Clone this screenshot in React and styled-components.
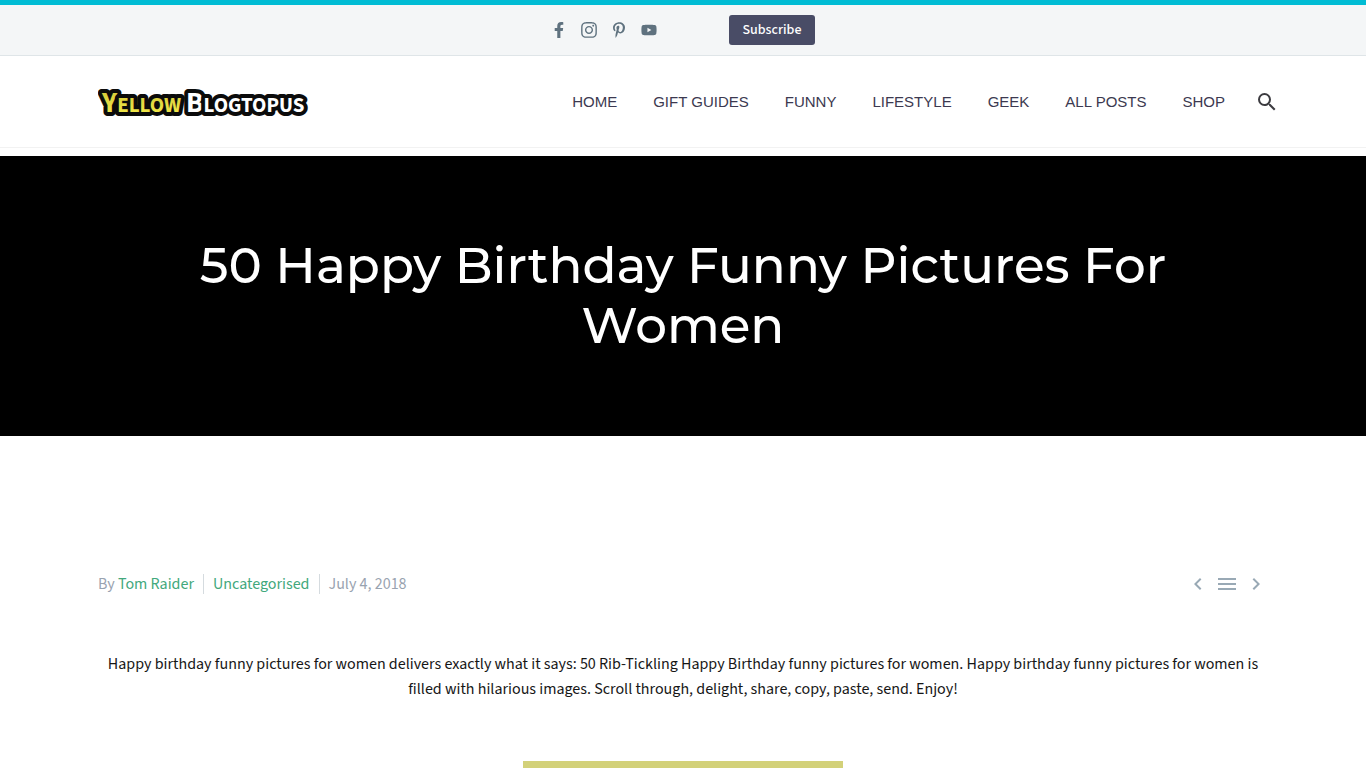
import React from "react"
import styled, { createGlobalStyle } from "styled-components"
import {
  FaFacebookF,
  FaInstagram,
  FaPinterestP,
  FaYoutube,
} from "react-icons/fa"
import {
  MdChevronLeft,
  MdChevronRight,
  MdMenu,
  MdSearch,
} from "react-icons/md"

const GlobalStyle = createGlobalStyle`
  * {
    box-sizing: border-box;
  }
  body {
    margin: 0;
    background: #fff;
    color: #161616;
    font-family: "Source Sans Pro", "Source Sans 3", "Noto Sans CJK SC", sans-serif;
    font-size: 16px;
    line-height: 25px;
  }
  a {
    color: inherit;
    text-decoration: none;
  }
`

const Container = styled.div`
  width: 100%;
  max-width: 1170px;
  margin: 0 auto;
`

const TopArea = styled.div`
  display: flex;
  align-items: center;
  justify-content: center;
  gap: 72px;
  height: 56px;
  border-top: 5px solid #00bcd4;
  border-bottom: 1px solid #dfe5e8;
  background: #f4f6f7;
`

const Socials = styled.div`
  display: flex;
  gap: 14px;
  color: #5f727f;
`

const SocialLink = styled.a`
  display: flex;
  align-items: center;
  justify-content: center;
  width: 16px;
  height: 16px;
  font-size: ${(props) => props.$size || 16}px;
`

const SubscribeLink = styled.a`
  height: 30px;
  padding: 0 14px;
  border-radius: 3px;
  background: #494c66;
  color: #fff;
  font-size: 14px;
  font-weight: 500;
  line-height: 30px;
`

const Header = styled.header`
  margin-bottom: 8px;
  border-bottom: 1px solid #f2f2f2;
`

const HeaderRow = styled(Container)`
  display: flex;
  align-items: center;
  justify-content: space-between;
  height: 91px;
`

const LogoLink = styled.a`
  display: flex;
`

const Menu = styled.nav`
  display: flex;
  align-items: center;
  margin-right: -23px;
  color: #3c3950;
  font-family: "Liberation Sans", Arial, sans-serif;
  font-size: 15px;
`

const MenuLink = styled.a`
  padding: 0 18px;
  white-space: nowrap;
`

const SearchButton = styled.button`
  display: flex;
  padding: 0 12px;
  border: 0;
  background: none;
  color: #3c3b40;
  font-size: 24px;
`

const TitleBlock = styled.section`
  padding: 80px 0;
  background: #000;
`

const Title = styled.h1`
  max-width: 1010px;
  margin: 0 auto;
  color: #fff;
  font-family: Montserrat, Inter, sans-serif;
  font-size: 50px;
  font-weight: 500;
  line-height: 60px;
  text-align: center;
`

const PostMeta = styled.div`
  display: flex;
  align-items: center;
  justify-content: space-between;
  margin-top: 136px;
  color: #99a3b0;
`

const MetaList = styled.div`
  display: flex;
  align-items: center;
`

const MetaItem = styled.span`
  line-height: 20px;

  & + & {
    margin-left: 9px;
    padding-left: 9px;
    border-left: 1px solid #d5dbdf;
  }

  a {
    color: #42a87c;
  }
`

const PostNav = styled.nav`
  display: flex;
  gap: 5px;
  color: #99a9b5;
  font-size: 24px;

  a {
    display: flex;
  }
`

const Intro = styled.p`
  margin: 56px 0 59px;
  text-align: center;
`

const Picture = styled.div`
  width: 320px;
  height: 320px;
  margin: 0 auto;
  background: #d3d179;
`

const menu = [
  "HOME",
  "GIFT GUIDES",
  "FUNNY",
  "LIFESTYLE",
  "GEEK",
  "ALL POSTS",
  "SHOP",
]

const socials = [
  { name: "Facebook", Icon: FaFacebookF },
  { name: "Instagram", Icon: FaInstagram, size: 18 },
  { name: "Pinterest", Icon: FaPinterestP },
  { name: "YouTube", Icon: FaYoutube },
]

function Logo() {
  return (
    <svg width="212" height="44" viewBox="0 0 212 44" role="img" aria-label="Yellow Blogtopus">
      <defs>
        <linearGradient id="gold" x1="0" y1="0" x2="0" y2="1">
          <stop offset="0.3" stopColor="#d8cf3c" />
          <stop offset="0.8" stopColor="#f4ea4a" />
        </linearGradient>
      </defs>
      <g
        fontFamily="'Source Sans Pro', 'Source Sans 3', 'Noto Sans CJK SC', sans-serif"
        fontWeight="700"
        fontSize="21"
        stroke="#0b0b0b"
        strokeWidth="8"
        strokeLinejoin="round"
        paintOrder="stroke"
      >
        <text x="4" y="32" fill="url(#gold)">
          <tspan fontSize="29">Y</tspan>ELLOW
        </text>
        <text x="88" y="32" fill="#fff">
          <tspan fontSize="29">B</tspan>LOGTOPUS
        </text>
      </g>
    </svg>
  )
}

export default function App() {
  return (
    <>
      <GlobalStyle />
      <TopArea>
        <Socials>
          {socials.map(({ name, Icon, size }) => (
            <SocialLink href="#" key={name} aria-label={name} $size={size}>
              <Icon />
            </SocialLink>
          ))}
        </Socials>
        <SubscribeLink href="#">Subscribe</SubscribeLink>
      </TopArea>
      <Header>
        <HeaderRow>
          <LogoLink href="#">
            <Logo />
          </LogoLink>
          <Menu>
            {menu.map((item) => (
              <MenuLink href="#" key={item}>
                {item}
              </MenuLink>
            ))}
            <SearchButton aria-label="Search">
              <MdSearch />
            </SearchButton>
          </Menu>
        </HeaderRow>
      </Header>
      <TitleBlock>
        <Title>50 Happy Birthday Funny Pictures For Women</Title>
      </TitleBlock>
      <Container as="main">
        <PostMeta>
          <MetaList>
            <MetaItem>
              By <a href="#">Tom Raider</a>
            </MetaItem>
            <MetaItem>
              <a href="#">Uncategorised</a>
            </MetaItem>
            <MetaItem>July 4, 2018</MetaItem>
          </MetaList>
          <PostNav>
            <a href="#" aria-label="Previous post">
              <MdChevronLeft />
            </a>
            <a href="#" aria-label="All posts">
              <MdMenu />
            </a>
            <a href="#" aria-label="Next post">
              <MdChevronRight />
            </a>
          </PostNav>
        </PostMeta>
        <Intro>
          Happy birthday funny pictures for women delivers exactly what it says:
          50 Rib-Tickling Happy Birthday funny pictures for women. Happy
          birthday funny pictures for women is filled with hilarious images.
          Scroll through, delight, share, copy, paste, send. Enjoy!
        </Intro>
        <Picture />
      </Container>
    </>
  )
}
